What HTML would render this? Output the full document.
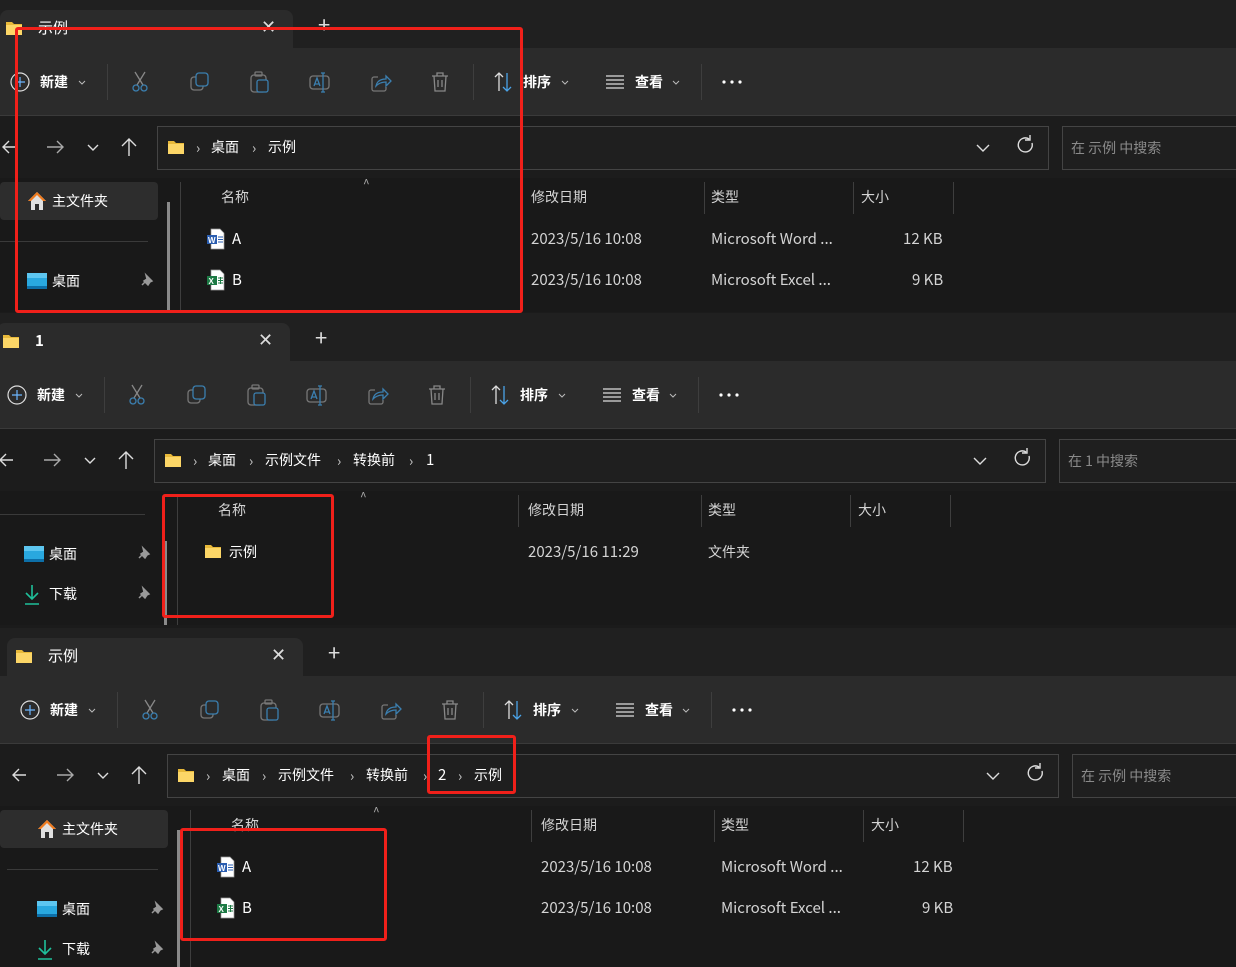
<!DOCTYPE html>
<html><head><meta charset="utf-8">
<style>
*{margin:0;padding:0;box-sizing:border-box}
body{width:1236px;height:967px;background:#1b1b1b;overflow:hidden;position:relative;font-family:"Noto Sans CJK SC","Liberation Sans",sans-serif;font-size:14px;line-height:20px;color:#fff}
.win{position:absolute;width:1260px;overflow:hidden;background:#202020}
.a{position:absolute;white-space:nowrap}
.tab{position:absolute;left:0;top:10px;width:293px;height:38px;background:#2b2b2b;border-radius:8px 8px 0 0}
.tb{position:absolute;left:0;top:48px;width:1260px;height:68px;background:#2b2b2b;border-bottom:1px solid #3a3a3a}
.ad{position:absolute;left:0;top:116px;width:1260px;height:62px;background:#1c1c1c}
.box{position:absolute;top:10px;height:44px;border:1px solid #444;background:#1f1f1f}
.ct{position:absolute;left:0;top:178px;width:1260px;height:200px;background:#191919}
.vd{position:absolute;width:1px;background:#3e3e3e}
.g{color:#d4d4d4}
.c{position:absolute;color:#ccc;top:138px}
.red{position:absolute;border:3px solid #f0201a;border-radius:3px}
svg{position:absolute;overflow:visible}
</style></head><body>
<svg width="0" height="0" style="position:absolute">
<defs>
<g id="fold"><path d="M0 2h6l2 2h8v11H0z" fill="#e8b93a"/><path d="M0 5h16v10H0z" fill="#fcd667"/></g>
<g id="tools" fill="none" stroke-width="1.3">
<g transform="translate(132,72)"><path d="M3 0l8 13M13 0L5 13" stroke="#888"/><circle cx="4" cy="16" r="3" stroke="#3b7fb0"/><circle cx="12" cy="16" r="3" stroke="#3b7fb0"/></g>
<g transform="translate(191,73)"><rect x="0" y="4" width="12" height="13" rx="3" stroke="#777"/><rect x="5" y="0" width="12" height="13" rx="3" stroke="#3b7fb0" fill="#2b2b2b"/></g>
<g transform="translate(251,72)"><rect x="0" y="3" width="15" height="17" rx="3" stroke="#777"/><rect x="4" y="0" width="7" height="4" rx="1" stroke="#777"/><rect x="6" y="8" width="11" height="12" rx="2" stroke="#3b7fb0" fill="#2b2b2b"/></g>
<g transform="translate(310,73)"><rect x="0" y="3" width="19" height="13" rx="3" stroke="#777"/><path d="M4 13l3-8 3 8M5 11h4" stroke="#3b7fb0"/><path d="M13 0v19M11 0h4M11 19h4" stroke="#3b7fb0"/></g>
<g transform="translate(371,73)"><path d="M7 4H3a2 2 0 0 0-2 2v10a2 2 0 0 0 2 2h10a2 2 0 0 0 2-2v-2" stroke="#777"/><path d="M5 13c1-5 5-7 10-7V3l5 5-5 5V9c-4 0-7 1-10 4z" stroke="#3b7fb0"/></g>
<g transform="translate(432,72)" stroke="#888"><path d="M0 4h16M5 4V1h6v3M2 4l1 15h10l1-15M6 8v7M10 8v7"/></g>
</g>
<g id="pin"><path d="M4 0l6 6-2 1-2 3-4-4 3-2zM3 7l-3 3" stroke="#999" stroke-width="1.5" fill="#999"/></g>
<g id="home"><path d="M10 1L1 10h3v9h4v-6h4v6h4v-9h3z" fill="#e0e0e0"/><path d="M10 1L1 10h3L10 4l6 6h3z" fill="#f07a1c"/></g>
<g id="desk"><rect x="0" y="0" width="20" height="16" rx="1" fill="#29a8df"/><rect x="0" y="0" width="20" height="5" fill="#5dc6f0"/><rect x="0" y="13" width="20" height="3" fill="#0d6fa8"/></g>
<g id="dl" stroke="#1fbf9a" stroke-width="1.6" fill="none"><path d="M8 0v14M2 8l6 6 6-6M1 19h14"/></g>
<g id="word"><path d="M4 0h9l4 4v16H4z" fill="#fff" stroke="#999" stroke-width=".7"/><rect x="0" y="6" width="10" height="9" fill="#2a5db0"/><text x="1" y="14" font-size="8" fill="#fff" font-family="Liberation Sans" font-weight="bold">W</text><path d="M11 8h5M11 10.5h5M11 13h5" stroke="#2a5db0"/></g>
<g id="xls"><path d="M4 0h9l4 4v16H4z" fill="#fff" stroke="#999" stroke-width=".7"/><rect x="0" y="6" width="10" height="9" fill="#1d7a45"/><text x="1.5" y="14" font-size="8" fill="#fff" font-family="Liberation Sans" font-weight="bold">X</text><path d="M11 8h5M11 10.5h5M11 13h5M13.5 7v7" stroke="#1d7a45"/></g>
</defs></svg>

<!-- ============ w1 ============ -->
<div class="win" style="left:0;top:0;height:312px">
 <div class="tab"></div>
 <svg width="18" height="16" style="left:6px;top:20px"><use href="#fold"/></svg>
 <div class="a" style="left:38px;top:18px;font-size:15px">示例</div>
 <div class="a" style="left:261px;top:16px;font-size:18px;color:#ddd">✕</div>
 <div class="a" style="left:318px;top:14px;font-size:22px;color:#ddd">+</div>
 <div class="tb"></div>
 <svg width="1260" height="116" style="left:0;top:0">
  <circle cx="20" cy="82" r="9" stroke="#ddd" fill="none" stroke-width="1.2"/><path d="M20 77v10M15 82h10" stroke="#6cb6ff" stroke-width="1.2"/>
  <path d="M79 81l3 3 3-3" stroke="#bbb" fill="none"/>
  <path d="M107.5 64v36M473.5 64v36M701.5 64v36" stroke="#3e3e3e"/>
  <use href="#tools"/>
  <path d="M499 73v18M495 77l4-4 4 4" stroke="#ddd" fill="none" stroke-width="1.3"/><path d="M507 73v18M503 87l4 4 4-4" stroke="#4aa3e8" fill="none" stroke-width="1.3"/>
  <path d="M562 81l3 3 3-3M673 81l3 3 3-3" stroke="#bbb" fill="none"/>
  <path d="M606 76h18M606 80h18M606 84h18M606 88h18" stroke="#ddd" stroke-width="1.2"/>
  <circle cx="724" cy="82" r="1.6" fill="#fff"/><circle cx="732" cy="82" r="1.6" fill="#fff"/><circle cx="740" cy="82" r="1.6" fill="#fff"/>
 </svg>
 <div class="a" style="left:40px;top:72px;font-weight:bold">新建</div>
 <div class="a" style="left:523px;top:72px;font-weight:bold">排序</div>
 <div class="a" style="left:635px;top:72px;font-weight:bold">查看</div>
 <div class="ad">
  <div class="box" style="left:157px;width:892px"></div>
  <div class="box" style="left:1062px;width:220px"></div>
 </div>
 <svg width="1260" height="178" style="left:0;top:0" fill="none" stroke="#ddd" stroke-width="1.4">
  <path d="M16 147H4M9 141l-6 6 6 6"/><path d="M47 147h16M57 141l6 6-6 6" stroke="#aaa"/><path d="M88 145l5 5 5-5"/><path d="M129 156V139M122 146l7-7 7 7"/>
  <path d="M977 145l6 6 6-6"/><path d="M1032 143a7 7 0 1 1-3-4M1030 135v5h-5"/>
 </svg>
 <svg width="18" height="16" style="left:168px;top:139px"><use href="#fold"/></svg>
 <div class="a" style="left:1071px;top:138px;color:#8a8a8a">在 示例 中搜索</div>
 <div class="c" style="left:196px">›</div><div class="a" style="left:211px;top:137px">桌面</div>
 <div class="c" style="left:252px">›</div><div class="a" style="left:268px;top:137px">示例</div>
 <div class="ct"></div>
 <div class="a" style="left:0;top:182px;width:158px;height:38px;background:#2d2d2d;border-radius:4px"></div>
 <svg width="20" height="20" style="left:27px;top:191px"><use href="#home"/></svg>
 <div class="a" style="left:52px;top:191px">主文件夹</div>
 <div class="a" style="left:0;top:241px;width:148px;height:1px;background:#3a3a3a"></div>
 <svg width="20" height="16" style="left:27px;top:273px"><use href="#desk"/></svg>
 <div class="a" style="left:52px;top:271px">桌面</div>
 <svg width="12" height="12" style="left:142px;top:275px"><use href="#pin"/></svg>
 <div class="a" style="left:167px;top:202px;width:3px;height:110px;background:#8a8a8a"></div>
 <div class="vd" style="left:180px;top:182px;height:130px"></div>
 <div class="a g" style="left:221px;top:187px">名称</div>
 <div class="a" style="left:363px;top:174px;color:#aaa;font-size:12px">^</div>
 <div class="vd" style="left:521px;top:182px;height:32px"></div><div class="a g" style="left:531px;top:187px">修改日期</div>
 <div class="vd" style="left:704px;top:182px;height:32px"></div><div class="a g" style="left:711px;top:187px">类型</div>
 <div class="vd" style="left:853px;top:182px;height:32px"></div><div class="a g" style="left:861px;top:187px">大小</div>
 <div class="vd" style="left:953px;top:182px;height:32px"></div>
 <svg width="18" height="20" style="left:207px;top:229px"><use href="#word"/></svg>
 <div class="a" style="left:232px;top:229px;font-size:15px">A</div>
 <div class="a g" style="left:531px;top:229px;font-size:15px">2023/5/16 10:08</div><div class="a g" style="left:711px;top:229px;font-size:15px">Microsoft Word ...</div><div class="a g" style="left:903px;top:229px;font-size:15px">12 KB</div>
 <svg width="18" height="20" style="left:207px;top:270px"><use href="#xls"/></svg>
 <div class="a" style="left:232px;top:270px;font-size:15px">B</div>
 <div class="a g" style="left:531px;top:270px;font-size:15px">2023/5/16 10:08</div><div class="a g" style="left:711px;top:270px;font-size:15px">Microsoft Excel ...</div><div class="a g" style="left:912px;top:270px;font-size:15px">9 KB</div>
</div>

<!-- ============ w2 ============ -->
<div class="win" style="left:-3px;top:313px;height:312px">
 <div class="tab"></div>
 <svg width="18" height="16" style="left:6px;top:20px"><use href="#fold"/></svg>
 <div class="a" style="left:38px;top:18px;font-size:15px;font-weight:bold">1</div>
 <div class="a" style="left:261px;top:16px;font-size:18px;color:#ddd">✕</div>
 <div class="a" style="left:318px;top:14px;font-size:22px;color:#ddd">+</div>
 <div class="tb"></div>
 <svg width="1260" height="116" style="left:0;top:0">
  <circle cx="20" cy="82" r="9" stroke="#ddd" fill="none" stroke-width="1.2"/><path d="M20 77v10M15 82h10" stroke="#6cb6ff" stroke-width="1.2"/>
  <path d="M79 81l3 3 3-3" stroke="#bbb" fill="none"/>
  <path d="M107.5 64v36M473.5 64v36M701.5 64v36" stroke="#3e3e3e"/>
  <use href="#tools"/>
  <path d="M499 73v18M495 77l4-4 4 4" stroke="#ddd" fill="none" stroke-width="1.3"/><path d="M507 73v18M503 87l4 4 4-4" stroke="#4aa3e8" fill="none" stroke-width="1.3"/>
  <path d="M562 81l3 3 3-3M673 81l3 3 3-3" stroke="#bbb" fill="none"/>
  <path d="M606 76h18M606 80h18M606 84h18M606 88h18" stroke="#ddd" stroke-width="1.2"/>
  <circle cx="724" cy="82" r="1.6" fill="#fff"/><circle cx="732" cy="82" r="1.6" fill="#fff"/><circle cx="740" cy="82" r="1.6" fill="#fff"/>
 </svg>
 <div class="a" style="left:40px;top:72px;font-weight:bold">新建</div>
 <div class="a" style="left:523px;top:72px;font-weight:bold">排序</div>
 <div class="a" style="left:635px;top:72px;font-weight:bold">查看</div>
 <div class="ad">
  <div class="box" style="left:157px;width:892px"></div>
  <div class="box" style="left:1062px;width:220px"></div>
 </div>
 <svg width="1260" height="178" style="left:0;top:0" fill="none" stroke="#ddd" stroke-width="1.4">
  <path d="M16 147H4M9 141l-6 6 6 6"/><path d="M47 147h16M57 141l6 6-6 6" stroke="#aaa"/><path d="M88 145l5 5 5-5"/><path d="M129 156V139M122 146l7-7 7 7"/>
  <path d="M977 145l6 6 6-6"/><path d="M1032 143a7 7 0 1 1-3-4M1030 135v5h-5"/>
 </svg>
 <svg width="18" height="16" style="left:168px;top:139px"><use href="#fold"/></svg>
 <div class="a" style="left:1071px;top:138px;color:#8a8a8a">在 1 中搜索</div>
 <div class="c" style="left:196px">›</div><div class="a" style="left:211px;top:137px">桌面</div>
 <div class="c" style="left:252px">›</div><div class="a" style="left:268px;top:137px">示例文件</div>
 <div class="c" style="left:340px">›</div><div class="a" style="left:356px;top:137px">转换前</div>
 <div class="c" style="left:412px">›</div><div class="a" style="left:429px;top:137px;font-size:15px">1</div>
 <div class="ct"></div>
 <div class="a" style="left:0;top:201px;width:148px;height:1px;background:#3a3a3a"></div>
 <svg width="20" height="16" style="left:27px;top:233px"><use href="#desk"/></svg>
 <div class="a" style="left:52px;top:231px">桌面</div>
 <svg width="12" height="12" style="left:142px;top:235px"><use href="#pin"/></svg>
 <svg width="20" height="20" style="left:27px;top:272px"><use href="#dl"/></svg>
 <div class="a" style="left:52px;top:271px">下载</div>
 <svg width="12" height="12" style="left:142px;top:275px"><use href="#pin"/></svg>
 <div class="a" style="left:167px;top:228px;width:3px;height:84px;background:#8a8a8a"></div>
 <div class="vd" style="left:180px;top:182px;height:130px"></div>
 <div class="a g" style="left:221px;top:187px">名称</div>
 <div class="a" style="left:363px;top:174px;color:#aaa;font-size:12px">^</div>
 <div class="vd" style="left:521px;top:182px;height:32px"></div><div class="a g" style="left:531px;top:187px">修改日期</div>
 <div class="vd" style="left:704px;top:182px;height:32px"></div><div class="a g" style="left:711px;top:187px">类型</div>
 <div class="vd" style="left:853px;top:182px;height:32px"></div><div class="a g" style="left:861px;top:187px">大小</div>
 <div class="vd" style="left:953px;top:182px;height:32px"></div>
 <svg width="18" height="16" style="left:208px;top:230px"><use href="#fold"/></svg>
 <div class="a" style="left:232px;top:229px">示例</div>
 <div class="a g" style="left:531px;top:229px;font-size:15px">2023/5/16 11:29</div><div class="a g" style="left:711px;top:229px">文件夹</div>
</div>

<!-- ============ w3 ============ -->
<div class="win" style="left:0;top:628px;height:339px;width:1236px">
<div style="position:absolute;left:10px;top:0;width:1260px;height:339px">
 <div class="tab" style="left:-3px;width:296px"></div>
 <svg width="18" height="16" style="left:6px;top:20px"><use href="#fold"/></svg>
 <div class="a" style="left:38px;top:18px;font-size:15px">示例</div>
 <div class="a" style="left:261px;top:16px;font-size:18px;color:#ddd">✕</div>
 <div class="a" style="left:318px;top:14px;font-size:22px;color:#ddd">+</div>
 <div class="tb" style="left:-10px"></div>
 <svg width="1260" height="116" style="left:0;top:0">
  <circle cx="20" cy="82" r="9" stroke="#ddd" fill="none" stroke-width="1.2"/><path d="M20 77v10M15 82h10" stroke="#6cb6ff" stroke-width="1.2"/>
  <path d="M79 81l3 3 3-3" stroke="#bbb" fill="none"/>
  <path d="M107.5 64v36M473.5 64v36M701.5 64v36" stroke="#3e3e3e"/>
  <use href="#tools"/>
  <path d="M499 73v18M495 77l4-4 4 4" stroke="#ddd" fill="none" stroke-width="1.3"/><path d="M507 73v18M503 87l4 4 4-4" stroke="#4aa3e8" fill="none" stroke-width="1.3"/>
  <path d="M562 81l3 3 3-3M673 81l3 3 3-3" stroke="#bbb" fill="none"/>
  <path d="M606 76h18M606 80h18M606 84h18M606 88h18" stroke="#ddd" stroke-width="1.2"/>
  <circle cx="724" cy="82" r="1.6" fill="#fff"/><circle cx="732" cy="82" r="1.6" fill="#fff"/><circle cx="740" cy="82" r="1.6" fill="#fff"/>
 </svg>
 <div class="a" style="left:40px;top:72px;font-weight:bold">新建</div>
 <div class="a" style="left:523px;top:72px;font-weight:bold">排序</div>
 <div class="a" style="left:635px;top:72px;font-weight:bold">查看</div>
 <div class="ad" style="left:-10px">
  <div class="box" style="left:167px;width:892px"></div>
  <div class="box" style="left:1072px;width:220px"></div>
 </div>
 <svg width="1260" height="178" style="left:0;top:0" fill="none" stroke="#ddd" stroke-width="1.4">
  <path d="M16 147H4M9 141l-6 6 6 6"/><path d="M47 147h16M57 141l6 6-6 6" stroke="#aaa"/><path d="M88 145l5 5 5-5"/><path d="M129 156V139M122 146l7-7 7 7"/>
  <path d="M977 145l6 6 6-6"/><path d="M1032 143a7 7 0 1 1-3-4M1030 135v5h-5"/>
 </svg>
 <svg width="18" height="16" style="left:168px;top:139px"><use href="#fold"/></svg>
 <div class="a" style="left:1071px;top:138px;color:#8a8a8a">在 示例 中搜索</div>
 <div class="c" style="left:196px">›</div><div class="a" style="left:212px;top:137px">桌面</div>
 <div class="c" style="left:252px">›</div><div class="a" style="left:268px;top:137px">示例文件</div>
 <div class="c" style="left:340px">›</div><div class="a" style="left:356px;top:137px">转换前</div>
 <div class="c" style="left:413px">›</div><div class="a" style="left:428px;top:137px;font-size:15px">2</div>
 <div class="c" style="left:448px">›</div><div class="a" style="left:464px;top:137px">示例</div>
 <div class="ct" style="left:-10px;height:170px"></div>
 <div class="a" style="left:-10px;top:182px;width:168px;height:38px;background:#2d2d2d;border-radius:4px"></div>
 <svg width="20" height="20" style="left:27px;top:191px"><use href="#home"/></svg>
 <div class="a" style="left:52px;top:191px">主文件夹</div>
 <div class="a" style="left:-3px;top:241px;width:151px;height:1px;background:#3a3a3a"></div>
 <svg width="20" height="16" style="left:27px;top:273px"><use href="#desk"/></svg>
 <div class="a" style="left:52px;top:271px">桌面</div>
 <svg width="12" height="12" style="left:142px;top:275px"><use href="#pin"/></svg>
 <svg width="20" height="20" style="left:27px;top:312px"><use href="#dl"/></svg>
 <div class="a" style="left:52px;top:311px">下载</div>
 <svg width="12" height="12" style="left:142px;top:315px"><use href="#pin"/></svg>
 <div class="a" style="left:167px;top:202px;width:3px;height:137px;background:#8a8a8a"></div>
 <div class="vd" style="left:180px;top:182px;height:157px"></div>
 <div class="a g" style="left:221px;top:187px">名称</div>
 <div class="a" style="left:363px;top:174px;color:#aaa;font-size:12px">^</div>
 <div class="vd" style="left:521px;top:182px;height:32px"></div><div class="a g" style="left:531px;top:187px">修改日期</div>
 <div class="vd" style="left:704px;top:182px;height:32px"></div><div class="a g" style="left:711px;top:187px">类型</div>
 <div class="vd" style="left:853px;top:182px;height:32px"></div><div class="a g" style="left:861px;top:187px">大小</div>
 <div class="vd" style="left:953px;top:182px;height:32px"></div>
 <svg width="18" height="20" style="left:207px;top:229px"><use href="#word"/></svg>
 <div class="a" style="left:232px;top:229px;font-size:15px">A</div>
 <div class="a g" style="left:531px;top:229px;font-size:15px">2023/5/16 10:08</div><div class="a g" style="left:711px;top:229px;font-size:15px">Microsoft Word ...</div><div class="a g" style="left:903px;top:229px;font-size:15px">12 KB</div>
 <svg width="18" height="20" style="left:207px;top:270px"><use href="#xls"/></svg>
 <div class="a" style="left:232px;top:270px;font-size:15px">B</div>
 <div class="a g" style="left:531px;top:270px;font-size:15px">2023/5/16 10:08</div><div class="a g" style="left:711px;top:270px;font-size:15px">Microsoft Excel ...</div><div class="a g" style="left:912px;top:270px;font-size:15px">9 KB</div>
</div>
</div>

<!-- red annotation boxes -->
<div class="red" style="left:15px;top:27px;width:508px;height:286px"></div>
<div class="red" style="left:162px;top:494px;width:172px;height:124px"></div>
<div class="red" style="left:427px;top:735px;width:89px;height:59px"></div>
<div class="red" style="left:180px;top:828px;width:207px;height:113px"></div>
</body></html>
